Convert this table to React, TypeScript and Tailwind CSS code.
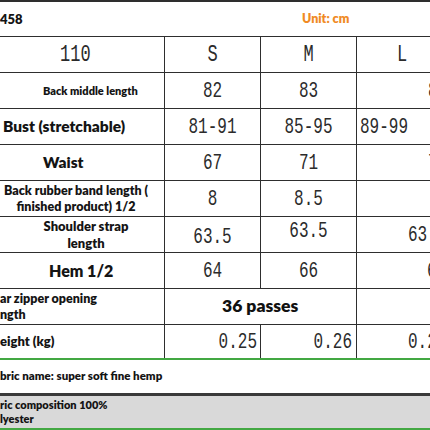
const num =
  "inline-block scale-y-140 font-['Liberation_Mono',monospace] text-[16px] leading-none text-[#2b2b2b] whitespace-nowrap";
const label = "font-['Lato','Open_Sans',sans-serif] font-extrabold text-[#141414] leading-tight whitespace-nowrap";
const cell = "flex h-full items-center overflow-hidden border-r border-[#2e2e2e]";

function Row({
  first,
  s,
  m,
  l,
  bottom = "border-b border-[#2e2e2e]",
  h = "h-[36px]",
}: {
  first: React.ReactNode;
  s: React.ReactNode;
  m: React.ReactNode;
  l: React.ReactNode;
  bottom?: string;
  h?: string;
}) {
  return (
    <div className={`grid ${h} grid-cols-[165px_96px_96px_1fr] ${bottom}`}>
      <div className={cell}>{first}</div>
      <div className={cell}>{s}</div>
      <div className={cell}>{m}</div>
      <div className="flex h-full items-center overflow-hidden">{l}</div>
    </div>
  );
}

export default function App() {
  return (
    <div className="h-[430px] w-[430px] overflow-hidden bg-white">
      <div className="h-[2px] bg-[#2e2e2e]" />

      <div className="flex h-[35px] items-center border-b border-[#2e2e2e]">
        <span className={`${label} w-[302px] text-[13px]`}>458</span>
        <span className="font-['Lato',sans-serif] text-[12.5px] font-extrabold text-[#f08a24]">
          Unit: cm
        </span>
      </div>

      <Row
        first={<span className={`${num} pl-[60px] text-[17px]`}>110</span>}
        s={<span className={`${num} w-full text-center text-[17px]`}>S</span>}
        m={<span className={`${num} w-full text-center text-[17px]`}>M</span>}
        l={<span className={`${num} pl-[40px] text-[17px]`}>L</span>}
      />
      <Row
        first={<span className={`${label} pl-[43px] text-[11px]`}>Back middle length</span>}
        s={<span className={`${num} w-full text-center`}>82</span>}
        m={<span className={`${num} w-full text-center`}>83</span>}
        l={<span className={`${num} pl-[71px]`}>86</span>}
      />
      <Row
        first={<span className={`${label} pl-[3px] text-[15.5px]`}>Bust (stretchable)</span>}
        s={<span className={`${num} w-full text-center`}>81-91</span>}
        m={<span className={`${num} w-full text-center`}>85-95</span>}
        l={<span className={`${num} pl-[3px]`}>89-99</span>}
      />
      <Row
        first={<span className={`${label} pl-[43px] text-[15.5px]`}>Waist</span>}
        s={<span className={`${num} w-full text-center`}>67</span>}
        m={<span className={`${num} w-full text-center`}>71</span>}
        l={<span className={`${num} pl-[71px]`}>75</span>}
      />
      <Row
        first={
          <span className={`${label} w-[152px] text-center text-[12.5px]`}>
            Back rubber band length (
            <br />
            finished product) 1/2
          </span>
        }
        s={<span className={`${num} w-full text-center`}>8</span>}
        m={<span className={`${num} w-full text-center`}>8.5</span>}
        l={null}
      />
      <Row
        first={
          <span className={`${label} ml-[43px] w-[86px] text-center text-[13px]`}>
            Shoulder strap
            <br />
            length
          </span>
        }
        s={<span className={`${num} w-full pt-[4px] text-center`}>63.5</span>}
        m={<span className={`${num} -mt-[8px] w-full text-center`}>63.5</span>}
        l={<span className={`${num} pl-[51px]`}>63.5</span>}
      />
      <Row
        first={<span className={`${label} pl-[49px] text-[16px]`}>Hem 1/2</span>}
        s={<span className={`${num} w-full text-center`}>64</span>}
        m={<span className={`${num} w-full text-center`}>66</span>}
        l={<span className={`${num} pl-[70px]`}>68</span>}
      />
      <div className="grid h-[36px] grid-cols-[165px_192px_1fr] border-b border-[#2e2e2e]">
        <div className={cell}>
          <span className={`${label} text-[12.5px]`}>
            ar zipper opening
            <br />
            ngth
          </span>
        </div>
        <div className={cell}>
          <span className="pl-[57px] font-['Lato','Open_Sans',sans-serif] text-[17.5px] font-extrabold text-[#111]">
            36 passes
          </span>
        </div>
        <div />
      </div>
      <Row
        h="h-[35px]"
        bottom="border-b-2 border-[#43a843]"
        first={<span className={`${label} text-[13px]`}>eight (kg)</span>}
        s={<span className={`${num} w-full pr-[3px] text-right`}>0.25</span>}
        m={<span className={`${num} w-full pr-[4px] text-right`}>0.26</span>}
        l={<span className={`${num} pl-[51px]`}>0.28</span>}
      />

      <div className="flex h-[33px] items-center">
        <span className={`${label} text-[11.5px]`}>bric name: super soft fine hemp</span>
      </div>
      <div className="h-[3px] bg-[#3a3a3a]" />
      <div className="flex h-[32px] items-center bg-[#d9d9d9]">
        <span className={`${label} text-[11px]`}>
          ric composition 100%
          <br />
          lyester
        </span>
      </div>
      <div className="h-[3px] bg-[#43a843]" />
    </div>
  );
}
